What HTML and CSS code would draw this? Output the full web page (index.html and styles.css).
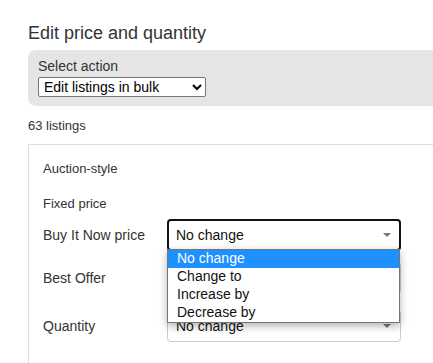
FILE: index.html
```html
<!DOCTYPE html>
<html lang="en">
<head>
    <meta charset="UTF-8">
    <title>Edit price and quantity</title>
    <link rel="stylesheet" href="styles.css">
</head>
<body>
    <div class="page">
        <h1>Edit price and quantity</h1>

        <div class="action-box">
            <label for="action">Select action</label>
            <select id="action" class="native-select">
                <option>Edit listings in bulk</option>
            </select>
        </div>

        <p class="count">63 listings</p>

        <div class="panel">
            <div class="section-title">Auction-style</div>
            <div class="section-title fixed">Fixed price</div>

            <div class="row row-bin">
                <span class="row-label">Buy It Now price</span>
                <div class="dropdown open">
                    <span class="dropdown-value">No change</span>
                    <span class="caret"></span>
                    <ul class="dropdown-list">
                        <li class="selected">No change</li>
                        <li>Change to</li>
                        <li>Increase by</li>
                        <li>Decrease by</li>
                    </ul>
                </div>
            </div>

            <div class="row row-offer">
                <span class="row-label">Best Offer</span>
                <div class="dropdown">
                    <span class="dropdown-value">No change</span>
                    <span class="caret"></span>
                </div>
            </div>

            <div class="row row-qty">
                <span class="row-label">Quantity</span>
                <div class="dropdown">
                    <span class="dropdown-value">No change</span>
                    <span class="caret"></span>
                </div>
            </div>
        </div>
    </div>
</body>
</html>
```

FILE: styles.css
```css
html, body {
    overflow: hidden;
}
body {
    margin: 0;
    font-family: "Liberation Sans", Arial, sans-serif;
    color: #333;
    background: #fff;
}
.page {
    width: 520px;
    padding: 23px 0 0 28px;
}
h1 {
    margin: 0 0 6px;
    font-size: 18px;
    font-weight: normal;
    line-height: 21px;
    color: #333;
}
.action-box {
    background-color: #e5e5e5;
    border-radius: 8px;
    padding: 7px 10px 9px;
}
.action-box label {
    display: block;
    font-size: 14px;
    line-height: 18px;
    margin-bottom: 2px;
}
.native-select {
    display: block;
    width: 168px;
    height: 20px;
    font-family: "Liberation Sans", Arial, sans-serif;
    font-size: 14px;
    color: #000;
    background: #fff;
    border: 1px solid #767676;
    border-radius: 2px;
    padding: 0 0 0 1px;
}
.count {
    margin: 12px 0 11px;
    font-size: 13px;
    line-height: 15px;
}
.panel {
    border: 1px solid #ddd;
    border-right: none;
    border-bottom: none;
    padding: 16px 0 40px 14px;
}
.section-title {
    font-size: 13px;
    line-height: 15px;
}
.section-title.fixed {
    margin-top: 20px;
}
.row {
    display: flex;
    align-items: baseline;
    font-size: 14px;
}
.row-label {
    width: 124px;
    flex-shrink: 0;
}
.row-bin {
    margin-top: 8px;
}
.row-offer {
    margin-top: 11px;
}
.row-qty {
    margin-top: 16px;
}
.dropdown {
    position: relative;
    width: 234px;
    height: 32px;
    box-sizing: border-box;
    border: 1px solid #ccc;
    border-radius: 4px;
    padding: 0 0 0 8px;
    line-height: 30px;
    color: #111;
    background: #fff;
}
.dropdown.open {
    border: 2px solid #111;
    padding-left: 7px;
    line-height: 28px;
}
.caret {
    position: absolute;
    right: 9px;
    top: 13px;
    width: 0;
    height: 0;
    border-left: 4px solid transparent;
    border-right: 4px solid transparent;
    border-top: 4px solid #777;
}
.open .caret {
    right: 8px;
    top: 12px;
}
.dropdown-list {
    position: absolute;
    top: 100%;
    left: -2px;
    z-index: 2;
    width: 233px;
    box-sizing: border-box;
    margin: 0;
    padding: 0;
    list-style: none;
    background: #fff;
    border: 1px solid #767676;
    box-shadow: 0 3px 8px rgba(0, 0, 0, 0.3);
}
.dropdown-list li {
    height: 18px;
    line-height: 17px;
    padding-left: 9px;
    color: #111;
}
.dropdown-list li.selected {
    background-color: #1e90ff;
    color: #fff;
}
```
